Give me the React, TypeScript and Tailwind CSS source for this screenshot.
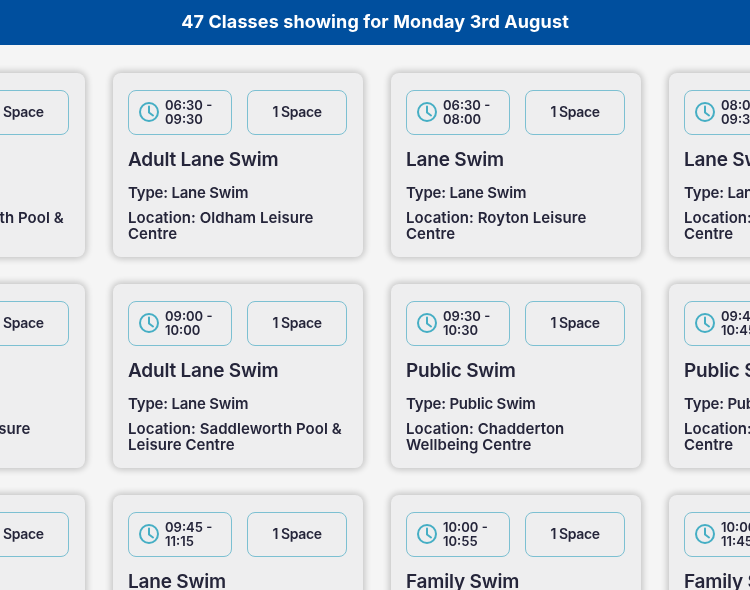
import React from "react";

type C = { t: string; n: string; k: string; l: string };

const rows: C[][] = [
  [
    { t: "06:00 - 07:00", n: "Lane Swim", k: "Lane Swim", l: "Location: Saddleworth Pool & Leisure Centre" },
    { t: "06:30 - 09:30", n: "Adult Lane Swim", k: "Lane Swim", l: "Location: Oldham Leisure Centre" },
    { t: "06:30 - 08:00", n: "Lane Swim", k: "Lane Swim", l: "Location: Royton Leisure Centre" },
    { t: "08:00 - 09:30", n: "Lane Swim", k: "Lane Swim", l: "Location: Oldham Leisure Centre" },
  ],
  [
    { t: "09:00 - 10:00", n: "Lane Swim", k: "Lane Swim", l: "Location: Royton Leisure Centre" },
    { t: "09:00 - 10:00", n: "Adult Lane Swim", k: "Lane Swim", l: "Location: Saddleworth Pool & Leisure Centre" },
    { t: "09:30 - 10:30", n: "Public Swim", k: "Public Swim", l: "Location: Chadderton Wellbeing Centre" },
    { t: "09:45 - 10:45", n: "Public Swim", k: "Public Swim", l: "Location: Oldham Leisure Centre" },
  ],
  [
    { t: "09:45 - 10:45", n: "Lane Swim", k: "Lane Swim", l: "Location: Oldham Leisure Centre" },
    { t: "09:45 - 11:15", n: "Lane Swim", k: "Lane Swim", l: "Location: Royton Leisure Centre" },
    { t: "10:00 - 10:55", n: "Family Swim", k: "Family Swim", l: "Location: Oldham Leisure Centre" },
    { t: "10:00 - 11:45", n: "Family Swim", k: "Family Swim", l: "Location: Royton Leisure Centre" },
  ],
];

function Clock() {
  return (
    <svg width="22" height="22" viewBox="0 0 22 22" fill="none" stroke="#45aec4" strokeWidth="2" strokeLinecap="round" strokeLinejoin="round" className="shrink-0">
      <circle cx="11" cy="11" r="9" />
      <path d="M11 5.5V11.5L15 14.5" />
    </svg>
  );
}

function Card({ c }: { c: C }) {
  return (
    <div className="h-[184px] w-[250px] shrink-0 rounded-lg bg-[#eeeeef] px-[15px] pt-[17px] text-[#25253a] shadow-[0_0_6px_2px_rgba(0,0,0,0.2)]">
      <div className="flex gap-[15px]">
        <div className="flex h-[45px] w-[104px] items-center gap-[5px] rounded-lg border-[1.5px] border-[#7cc0d2] pb-[1px] pl-[9px] text-[13px] font-semibold leading-[14px]">
          <Clock />
          <span className="w-[52px]">{c.t}</span>
        </div>
        <div className="flex h-[45px] w-[100px] items-center justify-center rounded-lg border-[1.5px] border-[#7cc0d2] pb-[3px] text-[14px] font-semibold tracking-[-0.4px]">
          1 Space
        </div>
      </div>
      <div className="mt-[13px] text-[19px] font-semibold leading-[24px] tracking-[-0.2px]">{c.n}</div>
      <div className="mt-[12px] text-[15px] font-semibold leading-[18px] tracking-[-0.2px]">Type: {c.k}</div>
      <div className="mt-[8px] text-[15px] font-semibold leading-[16px] tracking-[0.05px]">{c.l}</div>
    </div>
  );
}

export default function App() {
  return (
    <div className="h-[590px] w-[750px] overflow-hidden bg-[#f5f5f5] font-['Inter','Liberation_Sans',sans-serif] blur-[0.5px]">
      <div className="flex h-[45px] items-center justify-center bg-[#004f9e] pb-[2px] text-[18px] font-bold tracking-[0.12px] text-white">
        47 Classes showing for Monday 3rd August
      </div>
      <div className="ml-[-165px] flex flex-col gap-[27px] pt-[28px]">
        {rows.map((r, i) => (
          <div key={i} className="flex gap-[28px]">
            {r.map((c, j) => (
              <Card key={j} c={c} />
            ))}
          </div>
        ))}
      </div>
    </div>
  );
}
